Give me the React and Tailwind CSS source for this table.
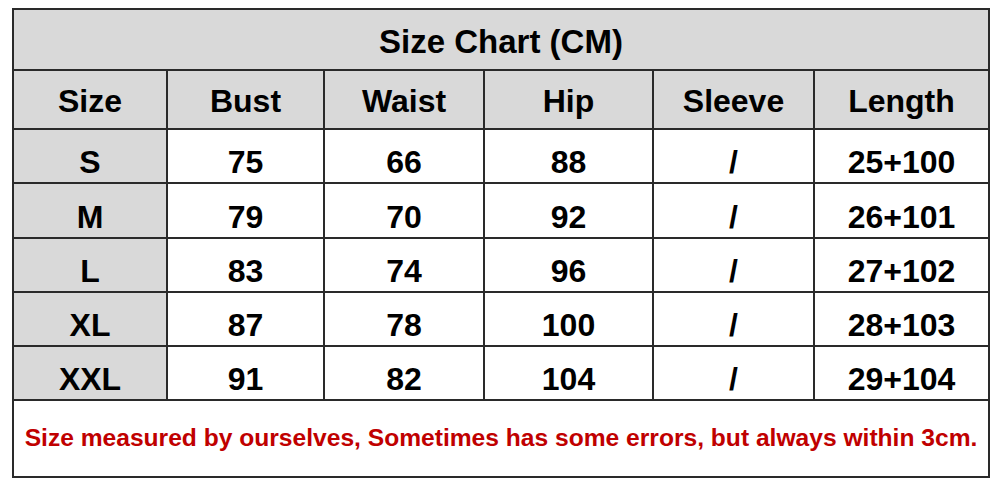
export default function App() {
  const cols = [
    { w: "w-[154px]", label: "Size" },
    { w: "w-[157px]", label: "Bust" },
    { w: "w-[160px]", label: "Waist" },
    { w: "w-[169px]", label: "Hip" },
    { w: "w-[161px]", label: "Sleeve" },
    { w: "w-[173px]", label: "Length" },
  ];
  const rows = [
    { h: "h-[54px]", d: ["S", "75", "66", "88", "/", "25+100"] },
    { h: "h-[55px]", d: ["M", "79", "70", "92", "/", "26+101"] },
    { h: "h-[54px]", d: ["L", "83", "74", "96", "/", "27+102"] },
    { h: "h-[54px]", d: ["XL", "87", "78", "100", "/", "28+103"] },
    { h: "h-[54px]", d: ["XXL", "91", "82", "104", "/", "29+104"] },
  ];
  return (
    <div
      className="w-[1000px] h-[485px] bg-white pt-[8px] pl-[12px] font-bold text-black"
      style={{ fontFamily: '"Liberation Sans", Arial, sans-serif' }}
    >
      <div className="w-[978px] border-2 border-[#2a2a2a] box-border flex flex-col">
        <div className="h-[61px] pt-[4px] border-b-2 border-[#2a2a2a] bg-[#d9d9d9] flex items-center justify-center text-[33px] leading-none">
          Size Chart (CM)
        </div>
        <div className="h-[59px] border-b-2 border-[#2a2a2a] bg-[#d9d9d9] flex">
          {cols.map((c, i) => (
            <div
              key={i}
              className={`${c.w} ${i < 5 ? "border-r-2 border-[#2a2a2a]" : ""} pt-[3px] flex items-center justify-center text-[32px] leading-none`}
            >
              {c.label}
            </div>
          ))}
        </div>
        {rows.map((r, ri) => (
          <div key={ri} className={`${r.h} border-b-2 border-[#2a2a2a] flex`}>
            {r.d.map((v, i) => (
              <div
                key={i}
                className={`${cols[i].w} ${i < 5 ? "border-r-2 border-[#2a2a2a]" : ""} ${i === 0 ? "bg-[#d9d9d9]" : "bg-white"} pt-[12px] flex items-center justify-center text-[32px] leading-none`}
              >
                {v}
              </div>
            ))}
          </div>
        ))}
        <div className="h-[75px] flex items-center justify-center text-[24.6px] leading-none text-[#c00000] whitespace-nowrap">
          Size measured by ourselves, Sometimes has some errors, but always within 3cm.
        </div>
      </div>
    </div>
  );
}
